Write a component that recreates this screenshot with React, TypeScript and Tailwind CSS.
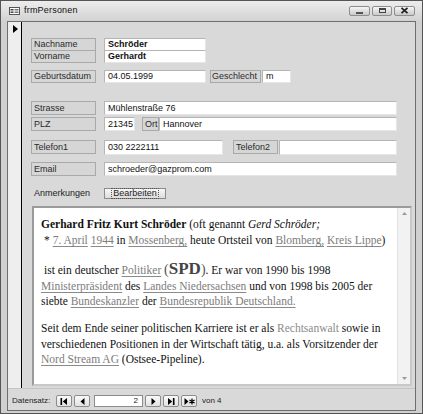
import React from "react";

const sans = { fontFamily: '"Liberation Sans", Arial, sans-serif' };
const serif = { fontFamily: '"Liberation Serif", "Times New Roman", serif' };

function Label({ text, w, h = 13, pl = 2 }: { text: string; w: number; h?: number; pl?: number }) {
  return (
    <div
      className="border border-[#a9a9a9] bg-[#d6d6d6] text-[9px] text-[#2a2a2a] flex items-center shrink-0 leading-none whitespace-nowrap"
      style={{ width: w, height: h, paddingLeft: pl }}
    >
      {text}
    </div>
  );
}

function Field({ text, w, h = 13, bold = false }: { text: string; w: number; h?: number; bold?: boolean }) {
  return (
    <div
      className={`bg-white border-t border-l border-[#b5b5b5] border-b border-r border-b-[#e6e6e6] border-r-[#e6e6e6] text-[9px] text-[#111] pl-[3px] flex items-center shrink-0 leading-none ${bold ? "font-bold" : ""}`}
      style={{ width: w, height: h }}
    >
      {text}
    </div>
  );
}

function L({ children }: { children: React.ReactNode }) {
  return <span className="text-[#7c7c7c] underline decoration-[#8a8a8a] underline-offset-[1.5px]">{children}</span>;
}

function NavBtn({ children, w = 16 }: { children: React.ReactNode; w?: number }) {
  return (
    <div
      className="h-[12px] border border-[#8c8c8c] rounded-[2px] bg-gradient-to-b from-[#fafafa] to-[#e2e2e2] flex items-center justify-center shrink-0"
      style={{ width: w }}
    >
      {children}
    </div>
  );
}

function WinBtn({ children, w }: { children: React.ReactNode; w: number }) {
  return (
    <div
      className="h-[10px] border border-[#8e8e8e] rounded-[2px] bg-gradient-to-b from-[#f6f6f6] to-[#c9c9c9] flex items-center justify-center"
      style={{ width: w }}
    >
      {children}
    </div>
  );
}

export default function App() {
  return (
    <div className="w-[423px] h-[414px] bg-[#d0d0d0] border border-[#555] flex flex-col" style={sans}>
      {/* Title bar */}
      <div className="h-[20px] shrink-0 flex items-center pl-[8px] pr-[7px] bg-gradient-to-b from-[#ededed] to-[#d2d2d2]">
        <svg width="11" height="8" viewBox="0 0 11 8" className="shrink-0">
          <rect x="0.5" y="0.5" width="10" height="7" fill="#fff" stroke="#555" />
          <rect x="1.5" y="2" width="3" height="1.5" fill="#444" />
          <rect x="1.5" y="4.5" width="3" height="1.5" fill="#444" />
          <rect x="5.5" y="2" width="4" height="1.5" fill="#777" />
          <rect x="5.5" y="4.5" width="4" height="1.5" fill="#777" />
        </svg>
        <span className="ml-[4px] text-[9px] text-[#111] tracking-[0.2px]">frmPersonen</span>
        <div className="ml-auto flex gap-[2px] mt-[-1px]">
          <WinBtn w={21}>
            <div className="w-[7px] h-[2px] border border-[#555] mt-[4px]" />
          </WinBtn>
          <WinBtn w={20}>
            <div className="w-[7px] h-[5px] border border-[#444] border-t-2" />
          </WinBtn>
          <WinBtn w={21}>
            <svg width="9" height="7" viewBox="0 0 9 7">
              <path d="M1.5 0.8 L7.5 6.2 M7.5 0.8 L1.5 6.2" stroke="#222" strokeWidth="1.8" />
            </svg>
          </WinBtn>
        </div>
      </div>

      {/* Body */}
      <div className="flex-1 flex flex-col mx-[6px] mb-[2px] border border-[#6e6e6e] bg-[#d9d9d9]">
        <div className="flex flex-1">
          {/* record selector */}
          <div className="w-[14px] shrink-0 bg-[#eeeeee] border-r border-black flex justify-center">
            <svg width="5" height="8" viewBox="0 0 5 8" className="mt-[3px] ml-[1px]">
              <path d="M0 0 L5 4 L0 8 Z" fill="#000" />
            </svg>
          </div>

          {/* form */}
          <div className="flex-1 flex flex-col pl-[9px] pt-[16px] text-[#111]">
            <div className="flex gap-[8px]">
              <Label text="Nachname" w={65} />
              <Field text="Schröder" w={102} bold />
            </div>
            <div className="flex gap-[8px] mt-[-1px]">
              <Label text="Vorname" w={65} />
              <Field text="Gerhardt" w={102} bold />
            </div>
            <div className="flex mt-[7px]">
              <Label text="Geburtsdatum" w={65} />
              <div className="ml-[8px]">
                <Field text="04.05.1999" w={102} />
              </div>
              <div className="ml-[4px]">
                <Label text="Geschlecht" w={51} pl={1} />
              </div>
              <div className="ml-[1px]">
                <Field text="m" w={29} />
              </div>
            </div>

            <div className="flex mt-[18px]">
              <Label text="Strasse" w={65} h={14} />
              <div className="ml-[8px]">
                <Field text="Mühlenstraße 76" w={293} h={14} />
              </div>
            </div>
            <div className="flex mt-[2px]">
              <Label text="PLZ" w={65} h={14} />
              <div className="ml-[8px]">
                <Field text="21345" w={31} h={14} />
              </div>
              <div className="ml-[7px]">
                <Label text="Ort" w={17} h={14} />
              </div>
              <div className="ml-[0px]">
                <Field text="Hannover" w={238} h={14} />
              </div>
            </div>
            <div className="flex mt-[9px]">
              <Label text="Telefon1" w={65} h={14} />
              <div className="ml-[8px]">
                <Field text="030 2222111" w={119} h={15} />
              </div>
              <div className="ml-[10px]">
                <Label text="Telefon2" w={45} h={14} />
              </div>
              <div className="ml-[1px]">
                <Field text="" w={118} h={15} />
              </div>
            </div>
            <div className="flex mt-[7px]">
              <Label text="Email" w={65} h={14} />
              <div className="ml-[8px]">
                <Field text="schroeder@gazprom.com" w={293} h={14} />
              </div>
            </div>

            <div className="flex mt-[12px] items-center h-[11px]">
              <div className="w-[73px] pl-[3px] text-[9px] text-[#222] leading-none">Anmerkungen</div>
              <div className="w-[62px] h-[11px] border border-[#8c8c8c] bg-gradient-to-b from-[#f8f8f8] to-[#dcdcdc] flex items-center justify-center">
                <span className="text-[9px] leading-none text-[#222] outline outline-1 outline-dotted outline-[#555] px-[1px]">
                  Bearbeiten
                </span>
              </div>
            </div>

            {/* rich text */}
            <div className="mt-[7px] ml-[1px] w-[380px] h-[180px] bg-white border-2 border-t-[#9a9a9a] border-l-[#9a9a9a] border-r-[#c8c8c8] border-b-[#c8c8c8] flex">
              <div className="flex-1 pl-[7px] pt-[8px] text-[11.5px] text-[#111]" style={serif}>
                <div className="h-[16px] leading-[16px] whitespace-nowrap">
                  <b>Gerhard Fritz Kurt Schröder</b> (oft genannt <i>Gerd Schröder;</i>
                </div>
                <div className="h-[16px] leading-[16px] whitespace-nowrap pl-[3px]">
                  * <L>7. April</L> <L>1944</L> in <L>Mossenberg,</L> heute Ortsteil von <L>Blomberg,</L>{" "}
                  <L>Kreis Lippe</L>)
                </div>
                <div className="h-[12px]" />
                <div className="h-[18px] leading-[18px] whitespace-nowrap pl-[3px]">
                  ist ein deutscher <L>Politiker</L>{" "}
                  <span className="text-[#555] text-[14px]">(</span>
                  <b className="text-[17px] text-[#444]">SPD</b>
                  <span className="text-[#555] text-[14px]">)</span>. Er war von 1990 bis 1998
                </div>
                <div className="h-[16px] leading-[16px] whitespace-nowrap">
                  <L>Ministerpräsident</L> des <L>Landes Niedersachsen</L> und von 1998 bis 2005 der
                </div>
                <div className="h-[15px] leading-[15px] whitespace-nowrap">
                  siebte <L>Bundeskanzler</L> der <L>Bundesrepublik Deutschland.</L>
                </div>
                <div className="h-[11px]" />
                <div className="h-[16px] leading-[16px] whitespace-nowrap">
                  Seit dem Ende seiner politischen Karriere ist er als{" "}
                  <span className="text-[#8a8a8a]">Rechtsanwalt</span> sowie in
                </div>
                <div className="h-[16px] leading-[16px] whitespace-nowrap">
                  verschiedenen Positionen in der Wirtschaft tätig, u.a. als Vorsitzender der
                </div>
                <div className="h-[15px] leading-[15px] whitespace-nowrap">
                  <L>Nord Stream AG</L> (Ostsee-Pipeline).
                </div>
              </div>
              {/* scrollbar */}
              <div className="w-[13px] bg-[#f2f2f2] border-l border-[#e2e2e2] flex flex-col justify-between items-center py-[4px]">
                <svg width="5" height="3" viewBox="0 0 5 3">
                  <path d="M0 3 L2.5 0 L5 3 Z" fill="#9a9a9a" />
                </svg>
                <svg width="5" height="3" viewBox="0 0 5 3">
                  <path d="M0 0 L2.5 3 L5 0 Z" fill="#9a9a9a" />
                </svg>
              </div>
            </div>
            <div className="h-[2px]" />
          </div>
        </div>

        {/* navigation bar */}
        <div className="h-[22px] shrink-0 flex items-center pl-[4px] pt-[3px] text-[8px] text-[#222] border-t border-[#c4c4c4]">
          <span className="w-[44px]">Datensatz:</span>
          <div className="flex items-center gap-[2px]">
            <NavBtn>
              <svg width="8" height="7" viewBox="0 0 8 7">
                <rect x="0.5" y="0" width="1.6" height="7" fill="#000" />
                <path d="M7 0 L2.8 3.5 L7 7 Z" fill="#000" />
              </svg>
            </NavBtn>
            <NavBtn>
              <svg width="5" height="7" viewBox="0 0 5 7">
                <path d="M4.5 0 L0.5 3.5 L4.5 7 Z" fill="#000" />
              </svg>
            </NavBtn>
            <div className="ml-[2px] w-[49px] h-[12px] bg-white border border-[#8c8c8c] flex items-center justify-end pr-[4px] text-[8px]">
              2
            </div>
            <NavBtn>
              <svg width="5" height="7" viewBox="0 0 5 7">
                <path d="M0.5 0 L4.5 3.5 L0.5 7 Z" fill="#000" />
              </svg>
            </NavBtn>
            <NavBtn>
              <svg width="8" height="7" viewBox="0 0 8 7">
                <path d="M1 0 L5.2 3.5 L1 7 Z" fill="#000" />
                <rect x="5.9" y="0" width="1.6" height="7" fill="#000" />
              </svg>
            </NavBtn>
            <NavBtn>
              <svg width="11" height="7" viewBox="0 0 11 7">
                <path d="M0.5 0 L4.5 3.5 L0.5 7 Z" fill="#000" />
                <path d="M8 0.5 V6.5 M5.4 2 L10.6 5 M10.6 2 L5.4 5" stroke="#000" strokeWidth="1.2" />
              </svg>
            </NavBtn>
            <span className="ml-[3px]">von 4</span>
          </div>
        </div>
      </div>
    </div>
  );
}
